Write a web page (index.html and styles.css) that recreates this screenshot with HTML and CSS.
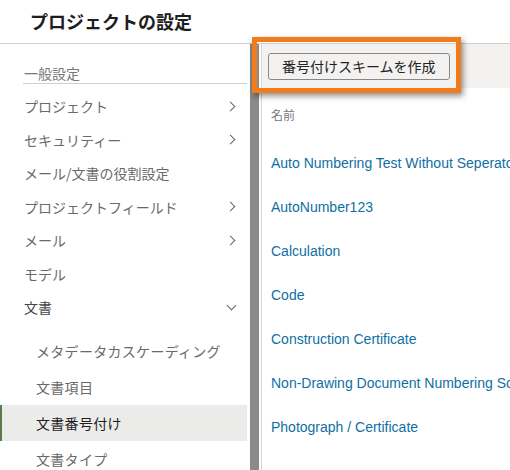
FILE: index.html
```html
<!DOCTYPE html>
<html lang="ja">
<head>
<meta charset="utf-8">
<title>プロジェクトの設定</title>
<link rel="stylesheet" href="styles.css">
</head>
<body>
<div class="page">
  <header class="top">
    <h1 class="title">プロジェクトの設定</h1>
  </header>
  <div class="main">
    <nav class="sidebar">
      <div class="section">一般設定</div>
      <ul class="nav">
        <li class="item"><span>プロジェクト</span><span class="chev-r"></span></li>
        <li class="item"><span>セキュリティー</span><span class="chev-r"></span></li>
        <li class="item"><span>メール/文書の役割設定</span></li>
        <li class="item"><span>プロジェクトフィールド</span><span class="chev-r"></span></li>
        <li class="item"><span>メール</span><span class="chev-r"></span></li>
        <li class="item"><span>モデル</span></li>
        <li class="item open"><span>文書</span><span class="chev-d"></span></li>
      </ul>
      <ul class="sub">
        <li class="subitem">メタデータカスケーディング</li>
        <li class="subitem">文書項目</li>
        <li class="subitem active">文書番号付け</li>
        <li class="subitem">文書タイプ</li>
      </ul>
    </nav>
    <div class="scroll"><span class="arrow"></span></div>
    <section class="content">
      <div class="toolbar">
        <button class="btn">番号付けスキームを作成</button>
      </div>
      <div class="colhead">名前</div>
      <ul class="list">
        <li class="row"><a href="#">Auto Numbering Test Without Seperator</a></li>
        <li class="row"><a href="#">AutoNumber123</a></li>
        <li class="row"><a href="#">Calculation</a></li>
        <li class="row"><a href="#">Code</a></li>
        <li class="row"><a href="#">Construction Certificate</a></li>
        <li class="row"><a href="#">Non-Drawing Document Numbering Scheme</a></li>
        <li class="row"><a href="#">Photograph / Certificate</a></li>
      </ul>
    </section>
  </div>
  <div class="highlight"></div>
</div>
</body>
</html>
```
FILE: styles.css
```css
* { box-sizing: border-box; }
html, body { margin: 0; padding: 0; }
body {
  width: 510px;
  height: 470px;
  overflow: hidden;
  background: #fff;
  font-family: "Noto Sans CJK JP", "Liberation Sans", sans-serif;
  color: #333;
}
.page { position: relative; width: 510px; height: 470px; overflow: hidden; }
.top {
  height: 44px;
  border-bottom: 1px solid #cfcfcf;
  display: flex;
  align-items: center;
  padding-left: 30px;
}
.title {
  margin: 0;
  font-size: 18px;
  font-weight: 700;
  color: #1e1e1e;
  line-height: 24px;
  padding-bottom: 2px;
}
.main { display: flex; height: 426px; }
.sidebar { width: 250px; flex: none; padding-right: 3px; }
.section {
  margin: 19px 0 0 23px;
  height: 21px;
  font-size: 14px;
  line-height: 20px;
  color: #777;
  border-bottom: 1px solid #cfcfcf;
  padding-left: 1px;
}
ul { list-style: none; margin: 0; padding: 0; }
.nav { margin-top: 5.5px; }
.item {
  height: 33.5px;
  display: flex;
  align-items: center;
  justify-content: space-between;
  padding: 0 11px 0 24px;
  font-size: 14px;
  color: #6a6a6a;
}
.item.open { color: #444; }
.chev-r {
  width: 7px; height: 7px;
  border-right: 1.5px solid #666;
  border-top: 1.5px solid #666;
  transform: rotate(45deg);
  margin-right: 2px;
}
.chev-d {
  width: 7px; height: 7px;
  border-right: 1.5px solid #666;
  border-bottom: 1.5px solid #666;
  transform: rotate(45deg);
  margin-top: -4px;
  margin-right: 1px;
}
.sub { margin-top: 8.5px; }
.subitem {
  height: 36px;
  display: flex;
  align-items: center;
  padding-left: 36px;
  font-size: 14px;
  color: #6a6a6a;
  letter-spacing: 0.3px;
}
.subitem.active {
  background: #ebebea;
  color: #1e1e1e;
  border-left: 2px solid #5b7b4c;
  padding-left: 34px;
}
.scroll {
  width: 9px;
  flex: none;
  background: #8a8a8a;
  margin-right: 2px;
  position: relative;
}
.arrow {
  position: absolute;
  left: 2px; top: 6px;
  width: 0; height: 0;
  border-left: 2.5px solid transparent;
  border-right: 2.5px solid transparent;
  border-bottom: 6px solid #4a4a4a;
}
.content {
  flex: 1;
  border-left: 1px solid #d6d6d6;
  min-width: 0;
}
.toolbar {
  height: 44px;
  background: #f3f2f1;
  display: flex;
  align-items: center;
  padding-left: 6px;
}
.btn {
  height: 27px;
  padding: 0 13px;
  border: 1px solid #8a8886;
  border-radius: 3px;
  background: #f3f2f1;
  font-family: "Noto Sans CJK JP", sans-serif;
  font-size: 14px;
  color: #222;
  line-height: 25px;
  margin-top: 1px;
}
.colhead {
  height: 53px;
  padding: 17px 0 0 9px;
  font-size: 12px;
  line-height: 20px;
  color: #777;
}
.row {
  height: 44px;
  display: flex;
  align-items: center;
  padding-left: 9px;
  white-space: nowrap;
}
.row a {
  font-family: "Liberation Sans", Arial, sans-serif;
  font-size: 14px;
  color: #0f6fa3;
  text-decoration: none;
}
.highlight {
  position: absolute;
  left: 252px;
  top: 37px;
  width: 209px;
  height: 56px;
  border: 5px solid #f27b1c;
  box-shadow: 2px 3px 6px rgba(0, 0, 0, 0.45);
}
```
